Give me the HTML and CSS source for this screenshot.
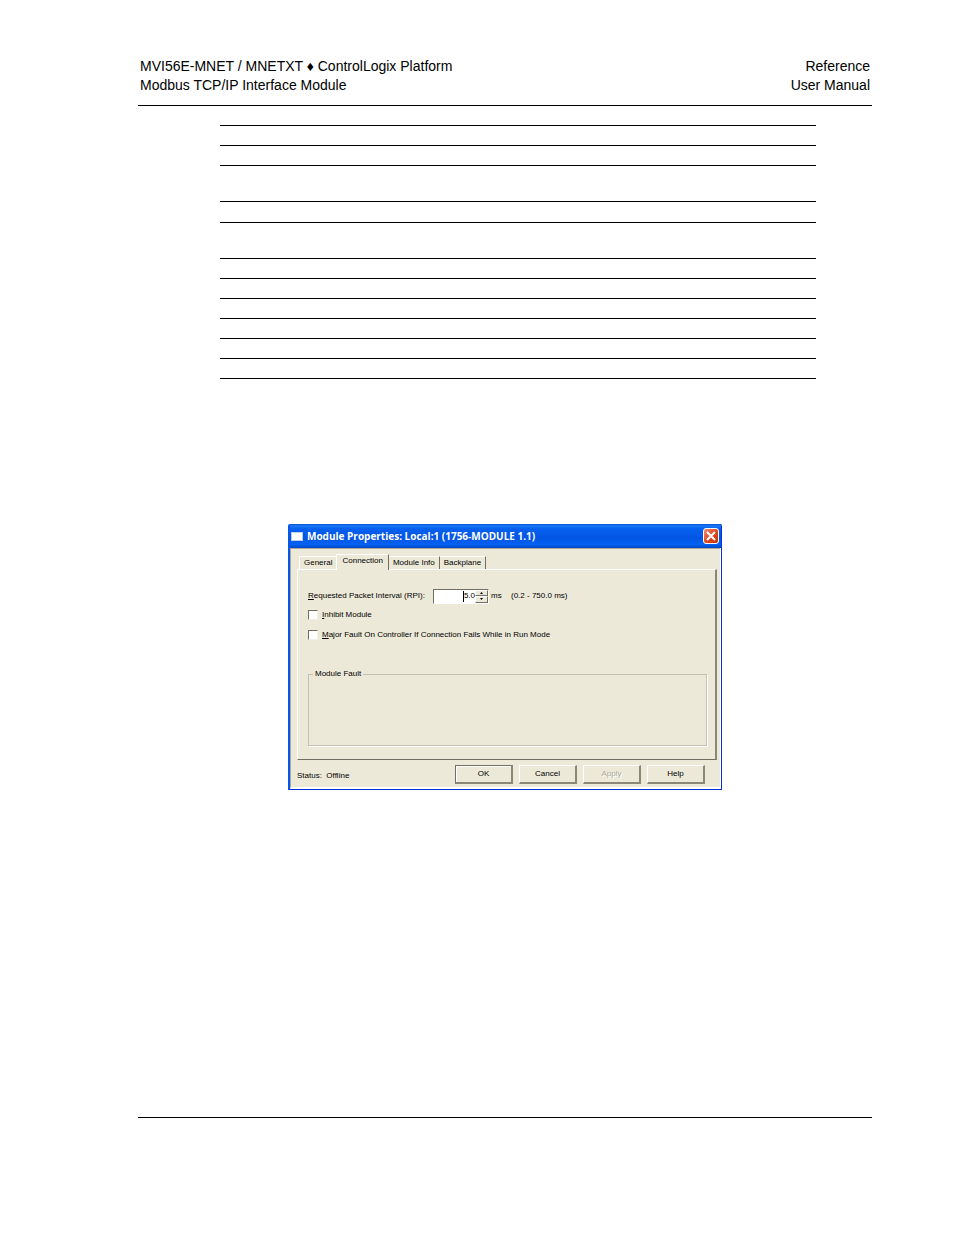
FILE: index.html
```html
<!DOCTYPE html>
<html lang="en">
<head>
    <meta charset="UTF-8">
    <meta name="viewport" content="width=device-width, initial-scale=1.0">
    <title>Reference - User Manual</title>
    <link rel="stylesheet" href="styles.css">
</head>
<body>
    <header class="page-header">
        <div>MVI56E-MNET / MNETXT ♦ ControlLogix Platform<br>Modbus TCP/IP Interface Module</div>
        <div class="header-right">Reference<br>User Manual</div>
    </header>
    <main class="content">
        <table class="parameters">
            <tbody>
                <tr><td></td></tr>
                <tr><td></td></tr>
                <tr class="tall"><td></td></tr>
                <tr class="medium"><td></td></tr>
                <tr class="tall"><td></td></tr>
                <tr><td></td></tr>
                <tr><td></td></tr>
                <tr><td></td></tr>
                <tr><td></td></tr>
                <tr><td></td></tr>
                <tr><td></td></tr>
            </tbody>
        </table>

        <section class="dialog">
            <div class="title-bar">
                <span class="title-icon"></span>
                <h1>Module Properties: Local:1 (1756-MODULE 1.1)</h1>
                <button type="button" class="close" aria-label="Close">
                    <svg width="16" height="16" viewBox="0 0 16 16">
                        <path d="M4 4L12 12M12 4L4 12" stroke="#fff" stroke-width="2" fill="none"/>
                    </svg>
                </button>
            </div>
            <form class="dialog-body">
                <div class="tabs">
                    <button type="button" class="tab tab-first">General</button>
                    <button type="button" class="tab active">Connection</button>
                    <button type="button" class="tab">Module Info</button>
                    <button type="button" class="tab">Backplane</button>
                </div>
                <div class="panel">
                    <div class="row">
                        <label for="rpi" class="rpi-label"><u>R</u>equested Packet Interval (RPI):</label>
                        <div class="spinner">
                            <input type="text" id="rpi" value="5.0">
                            <span class="caret"></span>
                            <div class="arrows">
                                <button type="button" aria-label="Increase"><svg width="5" height="3" viewBox="0 0 5 3"><path d="M1 3L2.5 1L4 3Z"/></svg></button>
                                <button type="button" aria-label="Decrease"><svg width="5" height="3" viewBox="0 0 5 3"><path d="M1 0L2.5 2L4 0Z"/></svg></button>
                            </div>
                        </div>
                        <span class="unit">ms</span>
                        <span>(0.2 - 750.0 ms)</span>
                    </div>
                    <div class="row">
                        <input type="checkbox" id="inhibit">
                        <label for="inhibit"><u>I</u>nhibit Module</label>
                    </div>
                    <div class="row">
                        <input type="checkbox" id="major-fault">
                        <label for="major-fault"><u>M</u>ajor Fault On Controller If Connection Fails While in Run Mode</label>
                    </div>
                    <fieldset>
                        <legend>Module Fault</legend>
                    </fieldset>
                </div>
                <div class="actions">
                    <span class="status">Status:&nbsp; Offline</span>
                    <button type="button" class="default">OK</button>
                    <button type="button">Cancel</button>
                    <button type="button" disabled>Apply</button>
                    <button type="button">Help</button>
                </div>
            </form>
        </section>
    </main>
    <footer class="page-footer"></footer>
</body>
</html>
```
FILE: styles.css
```css
* {
    box-sizing: border-box;
}

body {
    display: flex;
    flex-direction: column;
    min-height: 100vh;
    margin: 0;
    padding: 57px 82px 0 138px;
    background-color: #fff;
    color: #000;
    font-family: "Liberation Sans", Arial, sans-serif;
}

.page-header {
    display: flex;
    justify-content: space-between;
    padding: 0 2px 10px;
    border-bottom: 1px solid #000;
    font-size: 14px;
    line-height: 19px;
}

.header-right {
    text-align: right;
}

.content {
    flex: 1;
    padding: 19px 56px 0 82px;
}

.parameters {
    width: 100%;
    border-collapse: collapse;
    border-top: 1px solid #000;
}

.parameters td {
    height: 20px;
    padding: 0;
    border-bottom: 1px solid #000;
}

.parameters .medium td {
    height: 21px;
}

.parameters .tall td {
    height: 36px;
}

.dialog {
    max-width: 434px;
    margin: 145px 0 0 68px;
    border: solid #0831d9;
    border-width: 0 1px 1px 2px;
    border-left-color: #0855e8;
    border-radius: 2px 2px 0 0;
    background-color: #ece9d8;
    font-size: 8px;
    line-height: 12px;
}

.dialog button,
.dialog input {
    margin: 0;
    padding: 0;
    font: inherit;
    color: #000;
}

.title-bar {
    display: flex;
    align-items: center;
    height: 24px;
    padding: 0 2px 0 1px;
    background: linear-gradient(#0a50c8, #1c78f8 8%, #0660ee 20%, #0355e4 60%, #0462f4 85%, #0345c4);
}

.title-icon {
    width: 12px;
    height: 9px;
    border: 1px solid #b8d0f0;
    background-color: #fff;
}

.title-bar h1 {
    flex: 1;
    margin: 0 0 0 4px;
    color: #fff;
    font-family: "Open Sans", sans-serif;
    font-size: 10px;
    font-weight: 700;
    line-height: 16px;
}

.title-bar .close {
    width: 16px;
    height: 16px;
    border: 1px solid #fff;
    border-radius: 3px;
    background: linear-gradient(135deg, #f09070, #e04a20 50%, #c03510);
}

.close svg {
    display: block;
    margin: -1px;
}

.dialog-body {
    padding: 6px 3px 3px 6px;
    border: solid #fff;
    border-width: 0 1px 2px;
    border-left-color: #aca899;
    box-shadow: inset 0 1px #aca899;
}

.tabs {
    display: flex;
    align-items: flex-end;
    padding-left: 2px;
}

.dialog .tab {
    height: 13px;
    padding: 0 4px;
    border: solid #fff;
    border-width: 1px 1px 0 0;
    border-right-color: #716f64;
    background: none;
}

.dialog .tab-first {
    border-left: 1px solid #fff;
    border-right: none;
}

.dialog .active {
    height: 16px;
    margin-bottom: -1px;
    padding: 0 5px 3px;
    border-left: 1px solid #fff;
    background-color: #ece9d8;
}

.panel {
    padding: 18px 8px 13px 10px;
    border: 1px solid #fff;
    border-right: 2px solid #8a8778;
    border-bottom: 1px solid #716f64;
}

.row {
    display: flex;
    align-items: center;
    height: 20px;
}

.row:first-child {
    height: 16px;
    margin-bottom: 1px;
}

.rpi-label {
    width: 125px;
    white-space: nowrap;
}

.spinner {
    position: relative;
    display: flex;
    width: 56px;
    height: 15px;
    border: 1px solid #fff;
    border-top-color: #716f64;
    border-left-color: #716f64;
    background-color: #fff;
}

.spinner input {
    flex: 1;
    width: 100%;
    min-width: 0;
    border: none;
    background: none;
    text-align: right;
    outline: none;
}

.caret {
    position: absolute;
    top: 1px;
    right: 24px;
    width: 1px;
    height: 11px;
    background-color: #000;
}

.arrows {
    display: flex;
    flex-direction: column;
    width: 13px;
}

.arrows button {
    display: flex;
    flex: 1;
    align-items: center;
    justify-content: center;
    min-height: 0;
    border: 1px solid #fff;
    border-right-color: #716f64;
    border-bottom-color: #716f64;
    background-color: #ece9d8;
}

.unit {
    width: 22px;
    padding-left: 2px;
}

.dialog input[type="checkbox"] {
    appearance: none;
    width: 10px;
    height: 10px;
    margin-right: 4px;
    border: 1px solid #f4f2e8;
    border-top-color: #716f64;
    border-left-color: #716f64;
    background-color: #fff;
}

fieldset {
    height: 78px;
    margin: 23px 0 0;
    padding: 0 4px;
    border: 1px solid #c4c1b2;
    box-shadow: 1px 1px #fff;
}

legend {
    padding: 0 2px;
}

.actions {
    display: flex;
    gap: 6px;
    padding: 5px 12px 0 0;
}

.status {
    flex: 1;
    padding-top: 5px;
}

.dialog .actions button {
    width: 58px;
    height: 19px;
    border: 1px solid #fff;
    border-right: 2px solid #8a8778;
    border-bottom: 2px solid #8a8778;
    background-color: #ece9d8;
}

.dialog .actions .default {
    border-top-color: #716f64;
    border-left-color: #716f64;
    box-shadow: inset 1px 1px #fff;
}

.dialog .actions button:disabled {
    color: #aca899;
    text-shadow: 1px 1px #fff;
}

.page-footer {
    height: 118px;
    border-top: 1px solid #000;
}
```
